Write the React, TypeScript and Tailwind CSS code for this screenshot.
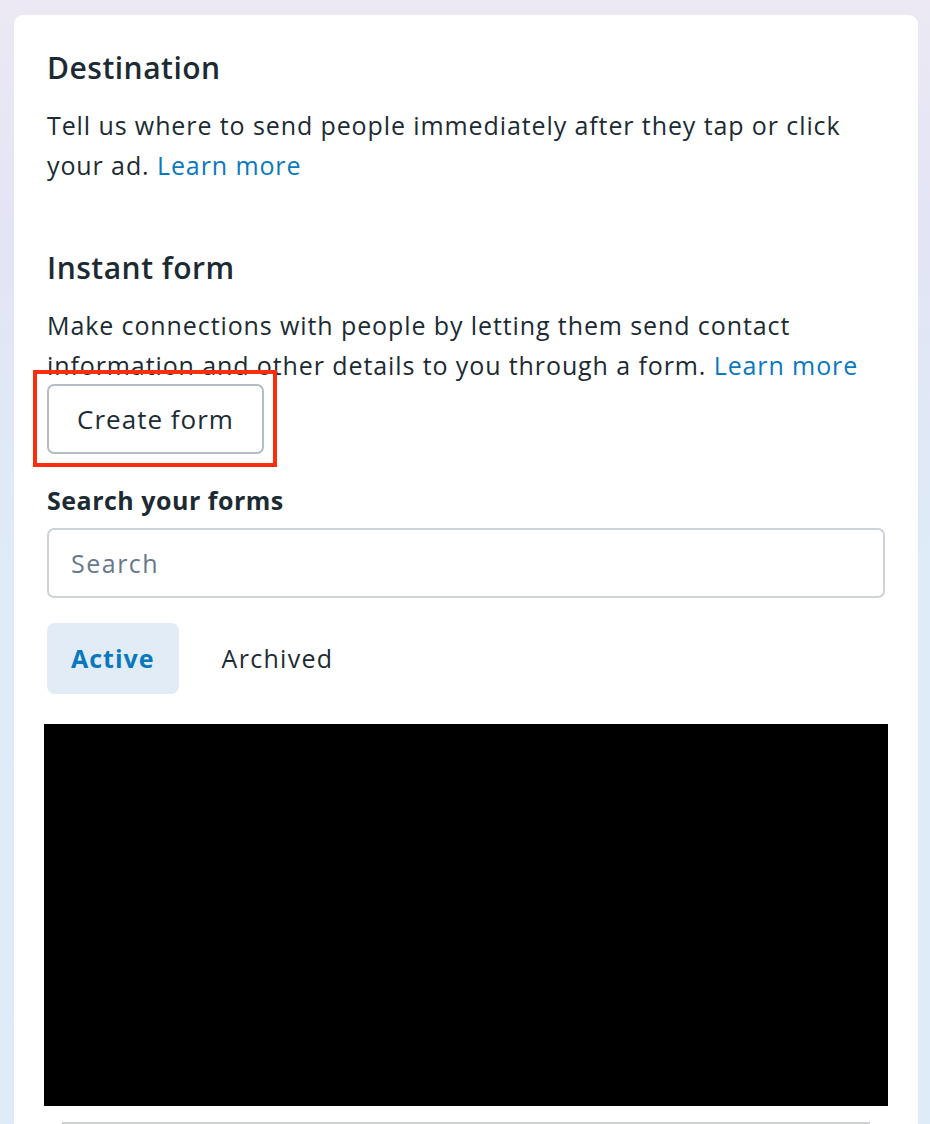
import { useState } from "react";

const font = { fontFamily: "'Open Sans', 'Noto Sans', sans-serif" };

export default function App() {
  const [tab, setTab] = useState<"active" | "archived">("active");
  const [query, setQuery] = useState("");

  return (
    <div
      className="min-h-screen bg-gradient-to-b from-[#ece9f3] via-[#e3e4f6] via-20% to-[#deebf8] to-50% pt-[15px] pl-[14px] pr-[12px]"
      style={font}
    >
      <div className="rounded-t-[9px] bg-white px-[33px] pt-[35px] pb-[2px] text-[#1c2b33]">
        <h2 className="text-[30px] leading-[36px] font-semibold tracking-[0.5px]">Destination</h2>
        <p className="mt-[19px] text-[25px] leading-[40px] tracking-[0.9px]">
          Tell us where to send people immediately after they tap or click your ad.{" "}
          <a href="#" className="text-[#0a78be]">
            Learn more
          </a>
        </p>

        <h2 className="mt-[65px] text-[30px] leading-[36px] font-semibold tracking-[0.5px]">
          Instant form
        </h2>
        <p className="mt-[19px] text-[25px] leading-[40px] tracking-[0.9px]">
          Make connections with people by letting them send contact information and other details to
          you through a form.{" "}
          <a href="#" className="text-[#0a78be]">
            Learn more
          </a>
        </p>

        <div className="relative -mt-px inline-block">
          <button className="h-[70px] w-[217px] rounded-[7px] border-2 border-[#b4bcc5] bg-white text-[26px] font-medium tracking-[1px] text-[#1c2b33]">
            Create form
          </button>
          <div className="pointer-events-none absolute -top-[14px] -left-[14px] -right-[13px] -bottom-[13px] border-4 border-[#fa2d0c]" />
        </div>

        <label className="mt-[28px] block text-[25px] leading-[36px] font-bold tracking-[0.5px]">
          Search your forms
        </label>
        <input
          value={query}
          onChange={(e) => setQuery(e.target.value)}
          placeholder="Search"
          className="mt-[10px] h-[70px] w-full rounded-[7px] border-2 border-[#ced3d9] px-[22px] text-[25px] tracking-[1.5px] text-[#1c2b33] placeholder:text-[#67788a] outline-none"
        />

        <div className="mt-[25px] flex gap-[19px]">
          <button
            onClick={() => setTab("active")}
            className={
              tab === "active"
                ? "h-[71px] rounded-[8px] bg-[#e2ecf7] px-[24px] text-[25px] font-bold tracking-[1px] text-[#0a78be]"
                : "h-[71px] rounded-[8px] px-[24px] text-[25px] tracking-[1.3px] text-[#1c2b33]"
            }
          >
            Active
          </button>
          <button
            onClick={() => setTab("archived")}
            className={
              tab === "archived"
                ? "h-[71px] rounded-[8px] bg-[#e2ecf7] px-[24px] text-[25px] font-bold tracking-[1px] text-[#0a78be]"
                : "h-[71px] rounded-[8px] px-[24px] text-[25px] tracking-[1.3px] text-[#1c2b33]"
            }
          >
            Archived
          </button>
        </div>

        <div className="mt-[30px] -mx-[3px] h-[382px] bg-black" />

        <div className="mt-[16px] ml-[15px] mr-[15px] border-t-2 border-[#ced0d4]" />
      </div>
    </div>
  );
}
